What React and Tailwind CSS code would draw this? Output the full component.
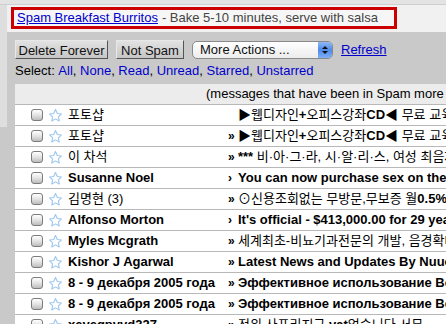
import React from "react";

const KR = ({ children }) => <span className="font-normal">{children}</span>;

function Star() {
  return (
    <svg width="15" height="15" viewBox="0 0 24 24" className="shrink-0">
      <path
        d="M12 2.5l2.9 6.2 6.7.8-5 4.6 1.4 6.6L12 17.4l-6 3.3 1.4-6.6-5-4.6 6.7-.8z"
        fill="#fff"
        stroke="#9ec6ee"
        strokeWidth="1.8"
        strokeLinejoin="round"
      />
    </svg>
  );
}

function Check() {
  return (
    <span className="w-[12px] h-[12px] shrink-0 rounded-[3px] border border-[#7c7c7c] bg-linear-to-b from-white via-[#e4e4e4] to-[#bdbdbd]" />
  );
}

const rows = [
  { from: <KR>포토샵</KR>, mark: "", subj: <>▶<KR>웹디자인</KR>+<KR>오피스강좌</KR>CD◀ <KR>무료 교육자료 배포</KR></>, bold: true },
  { from: <KR>포토샵</KR>, mark: "»", subj: <>▶<KR>웹디자인</KR>+<KR>오피스강좌</KR>CD◀ <KR>무료 교육자료 배포</KR></>, bold: true },
  { from: <KR>이 차석</KR>, mark: "»", subj: <>*** <KR>비·아·그·라, 시·알·리·스, 여성 최음제</KR></>, bold: true },
  { from: "Susanne Noel", mark: "›", subj: "You can now purchase sex on the internet", bold: true },
  { from: <KR>김명현 (3)</KR>, mark: "»", subj: <><KR>⊙신용조회없는 무방문,무보증 월</KR>0.5%</>, bold: true },
  { from: "Alfonso Morton", mark: "›", subj: "It's official - $413,000.00 for 29 years", bold: true },
  { from: "Myles Mcgrath", mark: "»", subj: <KR>세계최초-비뇨기과전문의 개발, 음경확대</KR>, bold: true },
  { from: "Kishor J Agarwal", mark: "»", subj: "Latest News and Updates By Nuuo Inc.", bold: true },
  { from: "8 - 9 декабря 2005 года", mark: "»", subj: "Эффективное использование Benchmarking", bold: true },
  { from: "8 - 9 декабря 2005 года", mark: "»", subj: "Эффективное использование Benchmarking", bold: true },
  { from: "xeyeqpyvd327", mark: "»", subj: <><KR>정위 사프리지근 </KR>vat<KR>없습니다 서무</KR></>, bold: true },
];

export default function App() {
  return (
    <div className="w-[446px] h-[324px] overflow-hidden flex flex-col bg-[#c9c9c9] text-[13px] text-black font-['Liberation_Sans','Noto_Sans_CJK_KR',sans-serif]">
      <div className="h-[5px] shrink-0 bg-[#e3e3e3] border-b border-[#cfcfcf]" />
      <div className="flex flex-1 min-h-0">
        <div className="w-[7px] shrink-0">
          <div className="h-[122px] bg-[#dedede]" />
        </div>
        <div className="flex-1 min-w-0 flex flex-col">
          {/* banner */}
          <div className="h-[27px] shrink-0 bg-[#f1f1f1] pl-[4px] pt-[2px]">
            <div className="w-[386px] h-[22px] border-[3px] border-[#cc0000] bg-[#f6f6f6] pl-[3px] flex items-center whitespace-nowrap">
              <a className="text-[#0000cc] underline">Spam Breakfast Burritos</a>
              <span className="text-[#444] ml-[4px]">- Bake 5-10 minutes, serve with salsa</span>
            </div>
          </div>

          {/* toolbar */}
          <div className="flex items-center pl-[8px] mt-[8px] h-[19px] whitespace-nowrap">
            <button className="h-[19px] w-[93px] bg-linear-to-b from-[#e2e2e2] to-[#c6c6c6] border border-t-[#e8e8e8] border-l-[#e8e8e8] border-r-[#555] border-b-[#555] text-[13px] text-[#111]">
              Delete Forever
            </button>
            <button className="ml-[8px] h-[19px] w-[68px] bg-linear-to-b from-[#e2e2e2] to-[#c6c6c6] border border-t-[#e8e8e8] border-l-[#e8e8e8] border-r-[#555] border-b-[#555] text-[13px] text-[#111]">
              Not Spam
            </button>
            <div className="ml-[8px] h-[18px] w-[141px] rounded-[5px] border border-[#8a8a8a] bg-linear-to-b from-white to-[#ececec] flex items-center overflow-hidden">
              <span className="flex-1 pl-[7px] text-[13px] text-[#111]">More Actions ...</span>
              <span className="w-[14px] h-full bg-linear-to-b from-[#8fb8f4] via-[#4d8ae8] to-[#7eaff5] flex flex-col items-center justify-center gap-[2px]">
                <span className="w-0 h-0 border-l-[3px] border-r-[3px] border-b-[3px] border-l-transparent border-r-transparent border-b-[#111]" />
                <span className="w-0 h-0 border-l-[3px] border-r-[3px] border-t-[3px] border-l-transparent border-r-transparent border-t-[#111]" />
              </span>
            </div>
            <a className="ml-[8px] text-[#0000cc] underline">Refresh</a>
          </div>

          {/* select line */}
          <div className="pl-[8px] mt-[4px] h-[16px] flex items-center whitespace-nowrap">
            Select:&nbsp;
            <span className="text-[#0000cc]">All</span>,&nbsp;
            <span className="text-[#0000cc]">None</span>,&nbsp;
            <span className="text-[#0000cc]">Read</span>,&nbsp;
            <span className="text-[#0000cc]">Unread</span>,&nbsp;
            <span className="text-[#0000cc]">Starred</span>,&nbsp;
            <span className="text-[#0000cc]">Unstarred</span>
          </div>

          {/* list */}
          <div className="ml-[8px] mt-[5px] w-[700px] shrink-0">
            <div className="h-[21px] bg-[#ececec] border-b border-[#b8b8b8] flex items-center pl-[191px] whitespace-nowrap">
              (messages that have been in Spam more than 30 days will be automatically deleted)
            </div>
            {rows.map((r, i) => (
              <div
                key={i}
                className={`h-[21px] bg-white border-b border-[#b8b8b8] flex items-center whitespace-nowrap ${r.bold ? "font-bold" : ""}`}
              >
                <span className="w-[16px] shrink-0" />
                <Check />
                <span className="w-[5px] shrink-0" />
                <Star />
                <span className="w-[5px] shrink-0" />
                <span className="w-[160px] shrink-0 overflow-hidden">{r.from}</span>
                <span className="w-[10px] shrink-0 text-[12px]">{r.mark}</span>
                <span>{r.subj}</span>
              </div>
            ))}
          </div>
        </div>
      </div>
    </div>
  );
}
